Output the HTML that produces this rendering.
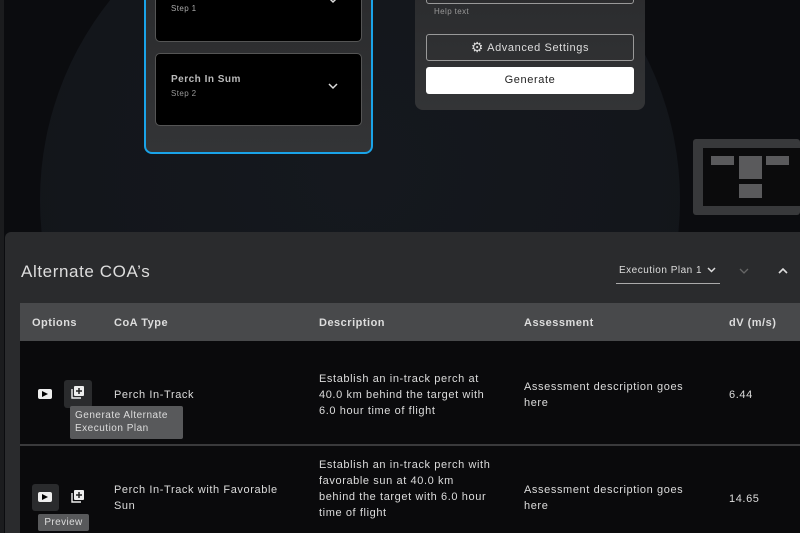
<!DOCTYPE html>
<html style="height:533px;overflow:hidden"><head><meta charset="utf-8"><style>
*{margin:0;padding:0;box-sizing:border-box}
html{width:800px;height:533px;overflow:hidden}
body{width:800px;height:533px;overflow:hidden;background:#0b0c0f;font-family:"Liberation Sans",sans-serif;color:#e4e4e4;position:relative}
.a{position:absolute}
.t{font-size:11px;line-height:16px;letter-spacing:0.6px;color:#dcdcdc;white-space:nowrap}
.h{font-size:11px;font-weight:bold;color:#ddd;letter-spacing:0.5px;top:317px}
</style></head><body>
<div class="a" style="left:0;top:0;width:4px;height:533px;background:#1b1c1e"></div>
<div class="a" style="left:40px;top:-120px;width:640px;height:640px;border-radius:50%;background:radial-gradient(circle at 50% 45%,#15181e 0%,#13161b 60%,#111318 100%)"></div>
<!-- left card panel -->
<div class="a" style="left:144px;top:-20px;width:229px;height:174px;background:linear-gradient(#2a2b2d,#333436);border:2px solid #1aa3e8;border-radius:8px"></div>
<div class="a" style="left:155px;top:-20px;width:207px;height:62px;background:#000;border:1px solid #555;border-radius:5px"></div>
<div class="a" style="left:171px;top:4px;font-size:8px;color:#aaa;letter-spacing:0.4px">Step 1</div>
<svg class="a" style="left:328px;top:-3px" width="10" height="7"><path d="M1 1L5 5L9 1" stroke="#ddd" stroke-width="1.5" fill="none"/></svg>
<div class="a" style="left:155px;top:53px;width:207px;height:73px;background:#000;border:1px solid #555;border-radius:5px"></div>
<div class="a" style="left:171px;top:74px;font-size:10px;font-weight:bold;color:#bbb;letter-spacing:0.5px">Perch In Sum</div>
<div class="a" style="left:171px;top:89px;font-size:8px;color:#999;letter-spacing:0.4px">Step 2</div>
<svg class="a" style="left:328px;top:83px" width="10" height="7"><path d="M1 1L5 5L9 1" stroke="#ddd" stroke-width="1.5" fill="none"/></svg>
<!-- right panel -->
<div class="a" style="left:415px;top:-20px;width:230px;height:130px;background:linear-gradient(#2a2b2d,#333436);border-radius:0 0 8px 8px"></div>
<div class="a" style="left:426px;top:-10px;width:208px;height:14px;border:1px solid #999;border-radius:3px"></div>
<div class="a" style="left:434px;top:7px;font-size:8px;color:#999;letter-spacing:0.4px">Help text</div>
<div class="a" style="left:426px;top:34px;width:208px;height:27px;border:1px solid #999;border-radius:3px;font-size:11px;color:#ddd;text-align:center;line-height:25px;letter-spacing:0.6px"><span style="font-size:14px;vertical-align:-1px">⚙</span> Advanced Settings</div>
<div class="a" style="left:426px;top:67px;width:208px;height:27px;background:#fff;border-radius:3px;font-size:11px;color:#222;text-align:center;line-height:27px;letter-spacing:0.6px">Generate</div>
<!-- minimap -->
<div class="a" style="left:693px;top:139px;width:107px;height:76px;background:#38393b;border-radius:3px"></div>
<div class="a" style="left:703px;top:148px;width:97px;height:58px;background:#0b0b0c"></div>
<div class="a" style="left:711px;top:156px;width:23px;height:9px;background:#5a5a5c"></div>
<div class="a" style="left:739px;top:156px;width:23px;height:23px;background:#5a5a5c"></div>
<div class="a" style="left:766px;top:156px;width:23px;height:9px;background:#5a5a5c"></div>
<div class="a" style="left:739px;top:184px;width:23px;height:14px;background:#5a5a5c"></div>
<!-- bottom panel -->
<div class="a" style="left:5px;top:232px;width:795px;height:301px;background:#2a2b2d;border-radius:6px 0 0 0"></div>
<div class="a" style="left:21px;top:262px;font-size:17px;color:#ddd;letter-spacing:0.6px">Alternate COA’s</div>
<div class="a" style="left:616px;top:264px;width:104px;height:20px;border-bottom:1px solid #aaa;font-size:10px;color:#ddd;letter-spacing:0.5px;padding-left:3px;padding-top:1px">Execution Plan 1 <svg width="9" height="6" style="margin-left:2px"><path d="M1 1L4.5 4.5L8 1" stroke="#ddd" stroke-width="1.5" fill="none"/></svg></div>
<svg class="a" style="left:739px;top:268px" width="10" height="6"><path d="M1 1L5 5L9 1" stroke="#666" stroke-width="1.3" fill="none"/></svg>
<svg class="a" style="left:778px;top:268px" width="10" height="6"><path d="M1 5L5 1L9 5" stroke="#ddd" stroke-width="1.6" fill="none"/></svg>
<div class="a" style="left:20px;top:303px;width:780px;height:38px;background:#48494b"></div>
<div class="a h" style="left:32px">Options</div>
<div class="a h" style="left:114px">CoA Type</div>
<div class="a h" style="left:319px">Description</div>
<div class="a h" style="left:524px">Assessment</div>
<div class="a h" style="left:729px">dV (m/s)</div>
<div class="a" style="left:20px;top:341px;width:780px;height:103px;background:#0a0a0c"></div>
<div class="a" style="left:20px;top:444px;width:780px;height:2px;background:#3a3a3c"></div>
<div class="a" style="left:20px;top:446px;width:780px;height:87px;background:#0a0a0c"></div>
<!-- row1 -->
<div class="a" style="left:38px;top:389px;width:14px;height:10px;background:#eee;border-radius:2px"></div>
<svg class="a" style="left:42px;top:391px" width="6" height="6"><path d="M0 0L6 3L0 6Z" fill="#000"/></svg>
<div class="a" style="left:64px;top:380px;width:28px;height:28px;background:#2a2b2d;border-radius:3px"></div>
<svg class="a" style="left:70px;top:385px" width="16" height="16"><rect x="4" y="1" width="10" height="10" rx="1" fill="#eee"/><path d="M9 3V9M6 6H12" stroke="#222" stroke-width="1.5"/><path d="M2 4V13H11" stroke="#eee" stroke-width="1.4" fill="none"/></svg>
<div class="a" style="left:70px;top:406px;width:113px;height:33px;background:#58595b;border-radius:2px;font-size:10px;line-height:13px;color:#ddd;padding:3px 5px;letter-spacing:0.5px">Generate Alternate Execution Plan</div>
<div class="a t" style="left:114px;top:387px">Perch In-Track</div>
<div class="a t" style="left:319px;top:371px">Establish an in-track perch at<br>40.0 km behind the target with<br>6.0 hour time of flight</div>
<div class="a t" style="left:524px;top:379px">Assessment description goes<br>here</div>
<div class="a t" style="left:729px;top:387px">6.44</div>
<!-- row2 -->
<div class="a" style="left:32px;top:484px;width:27px;height:27px;background:#2a2b2d;border-radius:3px"></div>
<div class="a" style="left:38px;top:492px;width:14px;height:10px;background:#eee;border-radius:2px"></div>
<svg class="a" style="left:42px;top:494px" width="6" height="6"><path d="M0 0L6 3L0 6Z" fill="#000"/></svg>
<svg class="a" style="left:70px;top:489px" width="16" height="16"><rect x="4" y="1" width="10" height="10" rx="1" fill="#eee"/><path d="M9 3V9M6 6H12" stroke="#222" stroke-width="1.5"/><path d="M2 4V13H11" stroke="#eee" stroke-width="1.4" fill="none"/></svg>
<div class="a" style="left:38px;top:514px;width:51px;height:17px;background:#58595b;border-radius:2px;font-size:10px;line-height:17px;color:#ddd;text-align:center;letter-spacing:0.4px">Preview</div>
<div class="a t" style="left:114px;top:482px">Perch In-Track with Favorable<br>Sun</div>
<div class="a t" style="left:319px;top:457px">Establish an in-track perch with<br>favorable sun at 40.0 km<br>behind the target with 6.0 hour<br>time of flight</div>
<div class="a t" style="left:524px;top:482px">Assessment description goes<br>here</div>
<div class="a t" style="left:729px;top:491px">14.65</div>
</body></html>
